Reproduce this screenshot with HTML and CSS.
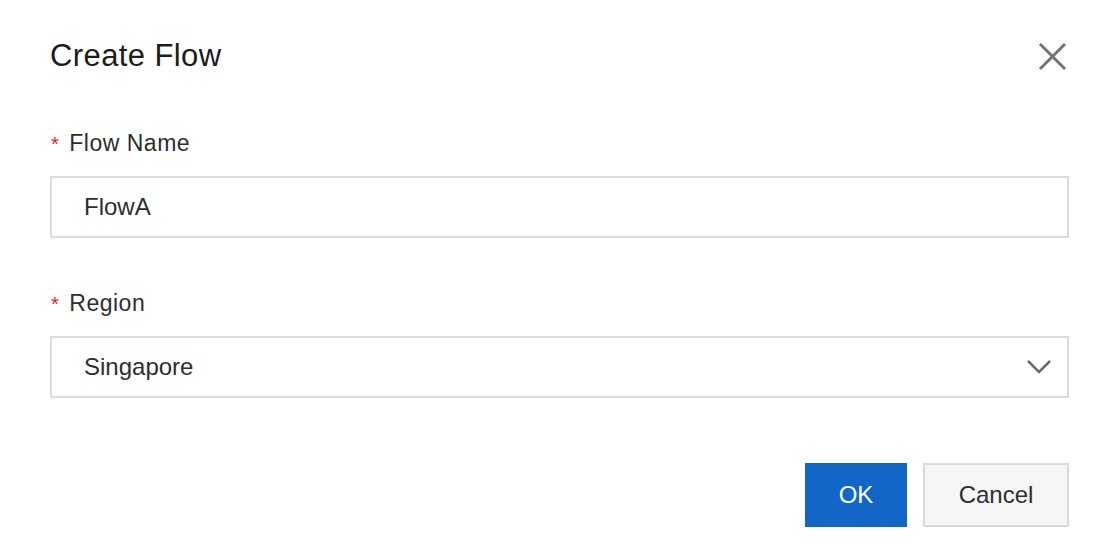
FILE: index.html
```html
<!DOCTYPE html>
<html>
<head>
<meta charset="utf-8">
<link rel="stylesheet" href="styles.css">
</head>
<body>
<div class="dialog">
  <div class="header">
    <h1 class="title">Create Flow</h1>
    <button class="close" aria-label="Close">
      <svg width="29" height="29" viewBox="0 0 29 29"><path d="M2 2 L27 27 M27 2 L2 27" stroke="#747474" stroke-width="3" fill="none"/></svg>
    </button>
  </div>
  <div class="field">
    <label class="label"><span class="req">*</span>Flow Name</label>
    <div class="input">FlowA</div>
  </div>
  <div class="field second">
    <label class="label"><span class="req">*</span>Region</label>
    <div class="input select">
      <span>Singapore</span>
      <svg class="chev" width="26" height="16" viewBox="0 0 26 16"><path d="M2 2 L13 13 L24 2" stroke="#6b6b6b" stroke-width="2.5" fill="none"/></svg>
    </div>
  </div>
  <div class="footer">
    <button class="btn primary">OK</button>
    <button class="btn secondary">Cancel</button>
  </div>
</div>
</body>
</html>
```
FILE: styles.css
```css
html, body {
  margin: 0;
  padding: 0;
  background: #fff;
}
body {
  font-family: "Liberation Sans", Arial, sans-serif;
  color: #333;
}
.dialog {
  width: 1114px;
  height: 550px;
  box-sizing: border-box;
  padding: 36px 45px 0 50px;
}
.header {
  display: flex;
  justify-content: space-between;
  align-items: center;
  height: 40px;
}
.title {
  margin: 0;
  font-size: 31px;
  letter-spacing: 0.4px;
  line-height: 40px;
  font-weight: normal;
  color: #1c1c1c;
}
.close {
  border: 0;
  background: none;
  padding: 0;
  margin-right: 2px;
  width: 29px;
  height: 29px;
  display: flex;
}
.field {
  margin-top: 52px;
  display: flex;
  flex-direction: column;
}
.field.second {
  margin-top: 50px;
}
.label {
  height: 30px;
  font-size: 23px;
  line-height: 30px;
  color: #2e2e2e;
  letter-spacing: 0.5px;
  margin-bottom: 18px;
  display: flex;
  align-items: baseline;
}
.req {
  color: #e0201b;
  font-size: 20px;
  line-height: 20px;
  margin-right: 10px;
  margin-left: 1px;
}
.input {
  height: 62px;
  box-sizing: border-box;
  border: 2px solid #dcdcdc;
  padding-left: 32px;
  font-size: 24px;
  color: #2e2e2e;
  display: flex;
  align-items: center;
}
.select {
  justify-content: space-between;
  padding-right: 15px;
}
.footer {
  margin-top: 65px;
  display: flex;
  justify-content: flex-end;
  gap: 16px;
}
.btn {
  height: 64px;
  font-family: "Liberation Sans", Arial, sans-serif;
  font-size: 24px;
  box-sizing: border-box;
  cursor: pointer;
}
.primary {
  width: 102px;
  background: #1266c6;
  color: #fff;
  border: 0;
}
.secondary {
  width: 146px;
  background: #f6f6f6;
  color: #2e2e2e;
  border: 2px solid #dadada;
}
```
